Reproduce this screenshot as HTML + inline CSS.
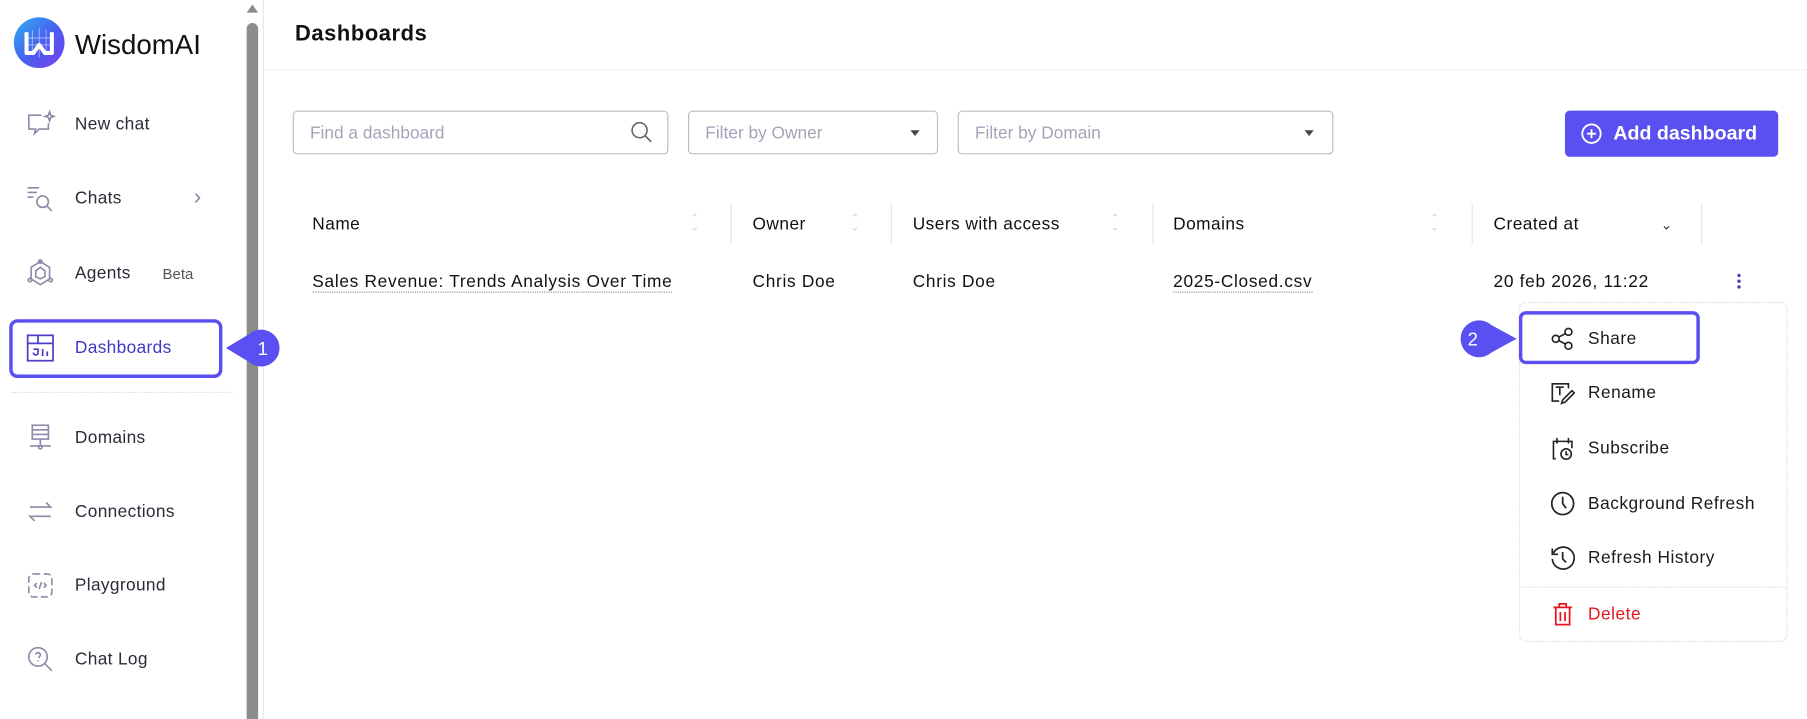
<!DOCTYPE html>
<html><head><meta charset="utf-8"><style>
html,body{margin:0;padding:0;width:1807px;height:719px;overflow:hidden;background:#fff}
#w{position:absolute;left:0;top:0;width:1568px;height:624px;transform:scale(1.15242);transform-origin:0 0;font-family:"Liberation Sans",sans-serif;color:#1a1a1a}
.a{position:absolute}
.nav{position:absolute;left:65px;font-size:15px;color:#2b2b3a;transform:translateY(-50%);letter-spacing:.3px}
.ic{position:absolute;left:22px;width:26px;height:26px;transform:translateY(-50%)}
.th{position:absolute;top:186px;font-size:15px;color:#111;letter-spacing:.4px}
.sep{position:absolute;top:176px;width:1px;height:36px;background:#e3e2f5}
.sort{position:absolute;top:185px;font-size:9px;color:#c9c8e6;line-height:8px}
.td{position:absolute;top:236px;font-size:15px;color:#111;letter-spacing:.6px}
.u{border-bottom:1px dotted #999}
.inp{position:absolute;top:96px;height:38px;border:1px solid #bcbcc8;border-radius:4px;box-sizing:border-box;font-size:15px;color:#a4a3b8;padding:10px 14px}
.mi{position:absolute;left:1378px;font-size:15px;color:#1a1a1a;transform:translateY(-50%);letter-spacing:.45px}
.mic{position:absolute;left:1345px;width:22px;height:22px;transform:translateY(-50%)}
</style></head><body><div id="w">
<div class="a" style="left:12px;top:15px;width:44px;height:44px;border-radius:50%;background:linear-gradient(135deg,#2ab0f0,#4b5cf0 55%,#7b3ff0)"></div>
<svg class="a" style="left:12px;top:15px" width="44" height="44" viewBox="0 0 44 44"><path d="M11 13 L11 31 L17 31 L22 24 L27 31 L33 31 L33 13" fill="none" stroke="#fff" stroke-width="3.5" stroke-linejoin="round"/><path d="M16 11v22M22 9v26M28 11v22M11 18h22M11 24h22" stroke="#fff" stroke-width=".6" opacity=".7"/></svg>
<div class="a" style="left:65px;top:26px;font-size:24px;color:#111">WisdomAI</div>

<svg class="ic" style="top:108px" viewBox="0 0 26 26" fill="none" stroke="#8c8aa8" stroke-width="1.4"><path d="M14 5H3v12h6l-1 4 4-4h8v-5"/><path d="M21 2l1 3 3 1-3 1-1 3-1-3-3-1 3-1z"/></svg>
<div class="nav" style="top:108px">New chat</div>
<svg class="ic" style="top:172px" viewBox="0 0 26 26" fill="none" stroke="#8c8aa8" stroke-width="1.4"><path d="M2 4h10M2 8h8M2 12h5"/><circle cx="15" cy="16" r="5"/><path d="M19 20l4 4"/></svg>
<div class="nav" style="top:172px">Chats</div>
<div class="a" style="left:168px;top:160px;font-size:20px;color:#8c8aa8">&#x203A;</div>
<svg class="ic" style="top:237px" viewBox="0 0 26 26" fill="none" stroke="#8c8aa8" stroke-width="1.4"><path d="M13 3l8 5v10l-8 5-8-5V8z"/><path d="M13 8l4 3v5l-4 2-4-2v-5z"/><circle cx="13" cy="3" r="1.5"/><circle cx="4" cy="19" r="1.5"/><circle cx="22" cy="19" r="1.5"/></svg>
<div class="nav" style="top:237px">Agents</div>
<div class="a" style="left:141px;top:230px;font-size:13px;color:#555">Beta</div>
<div class="a" style="left:8px;top:277px;width:185px;height:51px;border:3px solid #5a4ff0;border-radius:7px;box-sizing:border-box"></div>
<svg class="ic" style="top:302px" viewBox="0 0 26 26" fill="none" stroke="#4b3fc9" stroke-width="1.5"><rect x="2" y="2" width="22" height="22"/><path d="M2 9h22M11 2v7M7 14h4v3a2 2 0 1 1-4 0M15 14v6M19 16v4"/></svg>
<div class="nav" style="top:302px;color:#4038c4">Dashboards</div>
<div class="a" style="left:10px;top:340px;width:192px;border-top:1px dotted #d8d7ee"></div>
<svg class="ic" style="top:380px" viewBox="0 0 26 26" fill="none" stroke="#8c8aa8" stroke-width="1.4"><rect x="6" y="2" width="14" height="12"/><path d="M6 6h14M6 10h14M13 14v6M4 20h18"/><circle cx="13" cy="21" r="1.5"/></svg>
<div class="nav" style="top:380px">Domains</div>
<svg class="ic" style="top:444px" viewBox="0 0 26 26" fill="none" stroke="#8c8aa8" stroke-width="1.4"><path d="M4 9h18l-4-4M22 17H4l4 4"/></svg>
<div class="nav" style="top:444px">Connections</div>
<svg class="ic" style="top:508px" viewBox="0 0 26 26" fill="none" stroke="#8c8aa8" stroke-width="1.4"><rect x="3" y="3" width="20" height="20" rx="4" stroke-dasharray="6 3"/><path d="M10 11l-2 2 2 2M16 11l2 2-2 2M14 10l-2 6"/></svg>
<div class="nav" style="top:508px">Playground</div>
<svg class="ic" style="top:572px" viewBox="0 0 26 26" fill="none" stroke="#8c8aa8" stroke-width="1.4"><circle cx="11" cy="11" r="8"/><path d="M17 17l6 6M9 9a2 2 0 1 1 3 2v1M11 14v1"/></svg>
<div class="nav" style="top:572px">Chat Log</div>

<div class="a" style="left:214px;top:4px;width:0;height:0;border-left:5px solid transparent;border-right:5px solid transparent;border-bottom:7px solid #8a8a8a"></div>
<div class="a" style="left:214px;top:20px;width:10px;height:604px;background:#8c8c8c;border-radius:5px 5px 0 0"></div>
<div class="a" style="left:228px;top:0;width:1px;height:624px;background:#e6e6f2"></div>

<svg class="a" style="left:194px;top:284px" width="56" height="36"><path d="M2 18 L22 6 A16 16 0 1 1 22 30 Z" fill="#5a4ff0"/><text x="34" y="24" font-family="Liberation Sans" font-size="16" fill="#fff" text-anchor="middle">1</text></svg>

<div class="a" style="left:256px;top:19px;font-size:19px;font-weight:bold;color:#111;letter-spacing:.5px">Dashboards</div>
<div class="a" style="left:229px;top:60px;width:1339px;border-top:1px dotted #e0dff2"></div>
<div class="inp" style="left:254px;width:326px">Find a dashboard</div>
<svg class="a" style="left:547px;top:105px" width="20" height="20" fill="none" stroke="#666" stroke-width="1.4"><circle cx="8" cy="8" r="6.5"/><path d="M13 13l5 5"/></svg>
<div class="inp" style="left:597px;width:217px">Filter by Owner</div>
<div class="a" style="left:790px;top:113px;border-left:4px solid transparent;border-right:4px solid transparent;border-top:5px solid #444"></div>
<div class="inp" style="left:831px;width:326px">Filter by Domain</div>
<div class="a" style="left:1132px;top:113px;border-left:4px solid transparent;border-right:4px solid transparent;border-top:5px solid #444"></div>
<div class="a" style="left:1358px;top:96px;width:185px;height:40px;background:#5a4ff0;border-radius:4px"></div>
<svg class="a" style="left:1371px;top:106px" width="20" height="20" fill="none" stroke="#fff" stroke-width="1.6"><circle cx="10" cy="10" r="8"/><path d="M10 6v8M6 10h8"/></svg>
<div class="a" style="left:1400px;top:106px;font-size:17px;font-weight:bold;color:#fff">Add dashboard</div>

<div class="th" style="left:271px">Name</div>
<div class="sort" style="left:599px">&#x2303;<br>&#x2304;</div>
<div class="sep" style="left:634px"></div>
<div class="th" style="left:653px">Owner</div>
<div class="sort" style="left:738px">&#x2303;<br>&#x2304;</div>
<div class="sep" style="left:773px"></div>
<div class="th" style="left:792px">Users with access</div>
<div class="sort" style="left:964px">&#x2303;<br>&#x2304;</div>
<div class="sep" style="left:1000px"></div>
<div class="th" style="left:1018px">Domains</div>
<div class="sort" style="left:1241px">&#x2303;<br>&#x2304;</div>
<div class="sep" style="left:1277px"></div>
<div class="th" style="left:1296px">Created at</div>
<div class="a" style="left:1441px;top:188px;font-size:12px;color:#333">&#x2304;</div>
<div class="sep" style="left:1476px"></div>

<div class="td u" style="left:271px">Sales Revenue: Trends Analysis Over Time</div>
<div class="td" style="left:653px">Chris Doe</div>
<div class="td" style="left:792px">Chris Doe</div>
<div class="td u" style="left:1018px">2025-Closed.csv</div>
<div class="td" style="left:1296px">20 feb 2026, 11:22</div>
<svg class="a" style="left:1506px;top:236px" width="6" height="16" fill="#4b3fc9"><circle cx="3" cy="3" r="1.5"/><circle cx="3" cy="8" r="1.5"/><circle cx="3" cy="13" r="1.5"/></svg>

<div class="a" style="left:1318px;top:262px;width:233px;height:295px;border:1px dotted #d6d5ee;border-radius:6px;box-sizing:border-box;background:#fff"></div>
<div class="a" style="left:1318px;top:270px;width:157px;height:46px;border:3px solid #5a4ff0;border-radius:6px;box-sizing:border-box"></div>
<svg class="mic" style="top:294px" viewBox="0 0 22 22" fill="none" stroke="#222" stroke-width="1.4"><circle cx="5" cy="11" r="3"/><circle cx="16" cy="5" r="3"/><circle cx="16" cy="17" r="3"/><path d="M7.6 9.5l5.8-3M7.6 12.5l5.8 3"/></svg>
<div class="mi" style="top:294px">Share</div>
<svg class="mic" style="top:341px" viewBox="0 0 22 22" fill="none" stroke="#222" stroke-width="1.4"><path d="M8 18H2V3h14v4M5 6h7M8.5 6v7M19 9l-8 8-1 3 3-1 8-8z"/></svg>
<div class="mi" style="top:341px">Rename</div>
<svg class="mic" style="top:389px" viewBox="0 0 22 22" fill="none" stroke="#222" stroke-width="1.4"><path d="M5 20H3V5h16v6M6 2v5M16 2v5"/><circle cx="14" cy="16" r="4.5"/><path d="M14 13.5v3h2"/></svg>
<div class="mi" style="top:389px">Subscribe</div>
<svg class="mic" style="top:437px" viewBox="0 0 22 22" fill="none" stroke="#222" stroke-width="1.5"><circle cx="11" cy="11" r="9.5"/><path d="M11 5v6l3 4"/></svg>
<div class="mi" style="top:437px">Background Refresh</div>
<svg class="mic" style="top:484px" viewBox="0 0 22 22" fill="none" stroke="#222" stroke-width="1.5"><path d="M3 7a9.5 9.5 0 1 1-1 5M2 3v5h5"/><path d="M11 6v6l3 3"/></svg>
<div class="mi" style="top:484px">Refresh History</div>
<div class="a" style="left:1320px;top:509px;width:229px;border-top:1px dotted #d6d5ee"></div>
<svg class="mic" style="top:533px" viewBox="0 0 22 22" fill="none" stroke="#e8141c" stroke-width="1.5"><path d="M3 5h16M8 5V2h6v3M5 5v15h12V5M9 9v8M13 9v8"/></svg>
<div class="mi" style="top:533px;color:#e8141c">Delete</div>

<svg class="a" style="left:1258px;top:276px" width="60" height="36"><path d="M58 18 L36 6 A16 16 0 1 0 36 30 Z" fill="#5a4ff0"/><text x="20" y="24" font-family="Liberation Sans" font-size="16" fill="#fff" text-anchor="middle">2</text></svg>
</div></body></html>
